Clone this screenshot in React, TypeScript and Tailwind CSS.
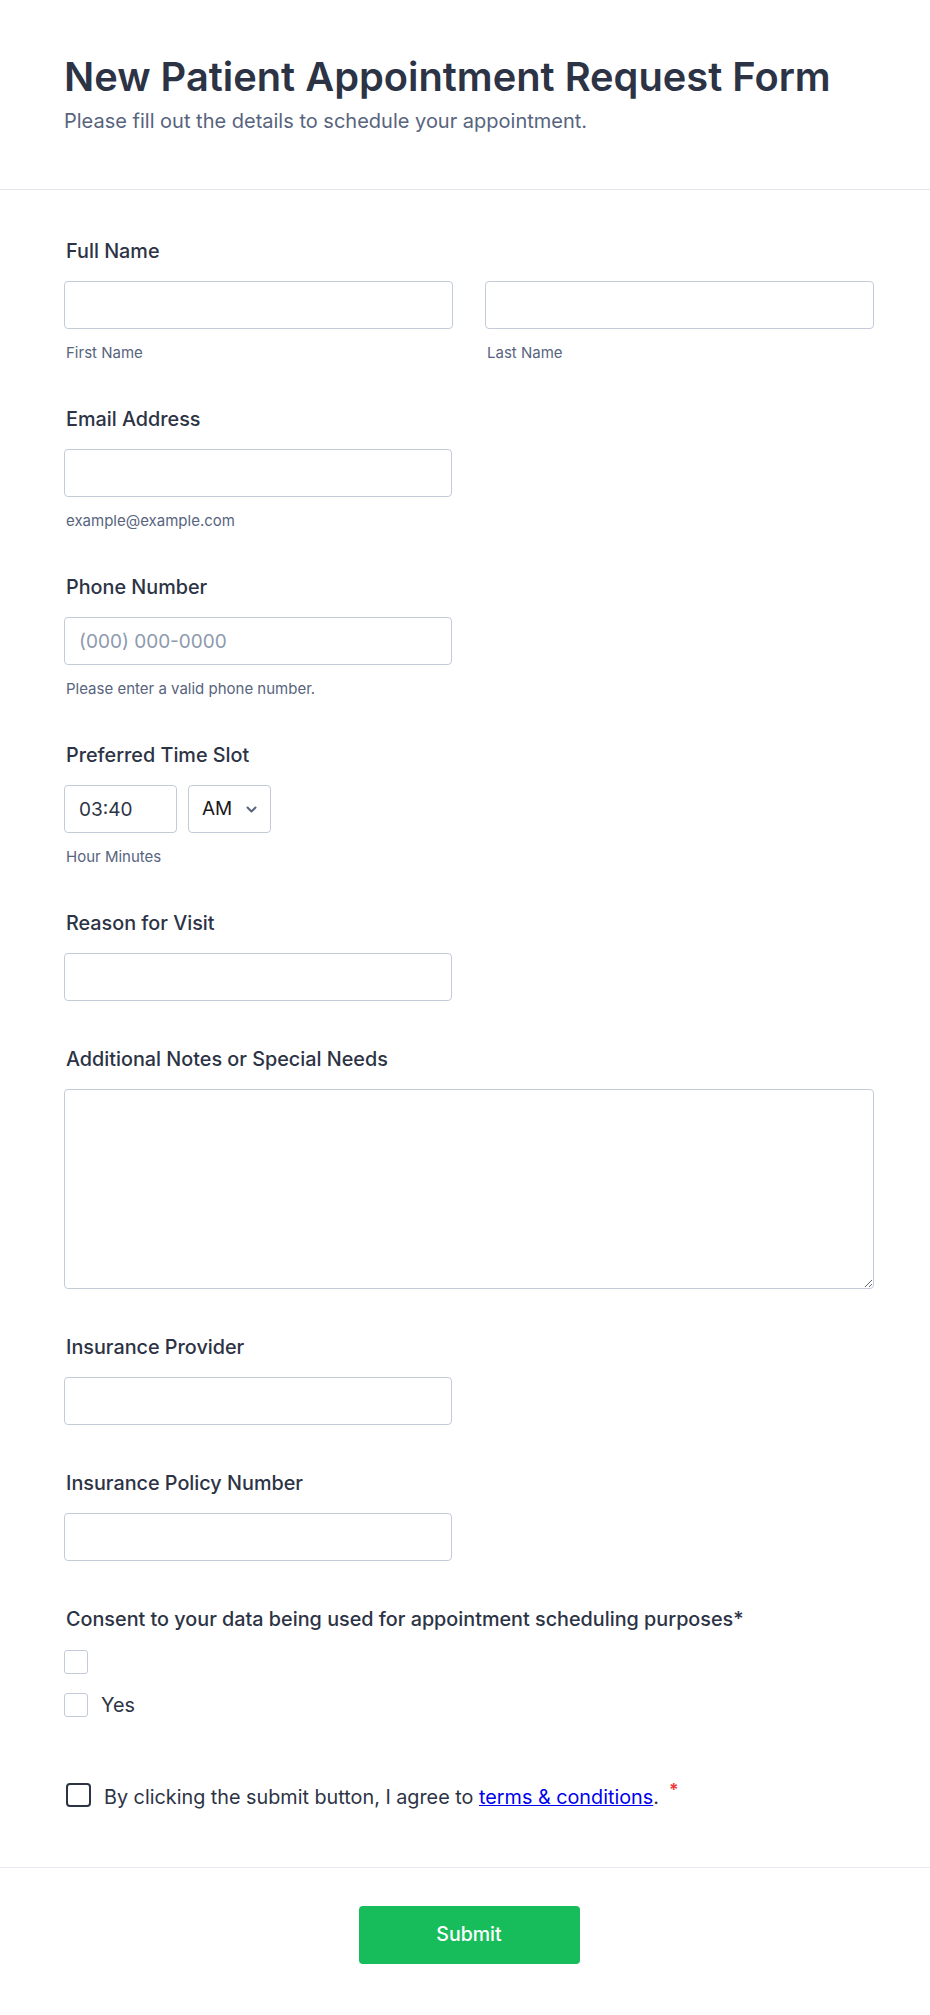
import React from 'react';

const labelCls = "block pl-[2px] text-[19.8px] leading-6 font-medium text-[#2c3345]";
const subCls = "block mt-[15px] pl-[2px] text-[15px] leading-[17px] text-[#57647e]";
const inputCls = "block w-full h-12 rounded-[4px] border border-[#c3cad8] bg-white px-[14px] text-[19px] text-[#2c3345] placeholder:text-[#8d99ad] outline-none";

const Field: React.FC<{ label: string; sub?: string; children: React.ReactNode }> = ({ label, sub, children }) => (
  <div>
    <label className={labelCls}>{label}</label>
    <div className="mt-[18px]">{children}</div>
    {sub && <span className={subCls}>{sub}</span>}
  </div>
);

export default function App() {
  return (
    <div className="min-h-screen bg-white font-['Inter','Noto_Sans',sans-serif] text-[#2c3345]">
      {/* Header */}
      <header className="pl-16 pr-14 pt-[53px] pb-[56px] border-b border-[#e3e5ec]">
        <h1 className="text-[39.8px] leading-[48px] font-semibold text-[#2c3345]">
          New Patient Appointment Request Form
        </h1>
        <p className="mt-2 text-[20px] leading-6 text-[#57647e]">
          Please fill out the details to schedule your appointment.
        </p>
      </header>

      {/* Fields */}
      <div className="pl-16 pr-14 pt-[49px] flex flex-col gap-[46px]">
        <div>
          <label className={labelCls}>Full Name</label>
          <div className="mt-[18px] grid grid-cols-2 gap-8">
            <div>
              <input className={inputCls} />
              <span className={subCls}>First Name</span>
            </div>
            <div>
              <input className={inputCls} />
              <span className={subCls}>Last Name</span>
            </div>
          </div>
        </div>

        <Field label="Email Address" sub="example@example.com">
          <input className={`${inputCls} !w-[388px]`} />
        </Field>

        <Field label="Phone Number" sub="Please enter a valid phone number.">
          <input className={`${inputCls} !w-[388px]`} placeholder="(000) 000-0000" />
        </Field>

        <Field label="Preferred Time Slot" sub="Hour Minutes">
          <div className="flex gap-[11px]">
            <input className={`${inputCls} !w-[113px]`} defaultValue="03:40" />
            <div className="relative w-[83px] h-12 rounded-[4px] border border-[#c3cad8] flex items-center pl-[13px] text-[19px] text-[#1a1a1a]">
              AM
              <svg className="absolute right-[13px] top-[20px]" width="11" height="7" viewBox="0 0 11 7" fill="none">
                <path d="M1.5 1.5l4 4 4-4" stroke="#57647e" strokeWidth="2" strokeLinecap="round" strokeLinejoin="round" />
              </svg>
            </div>
          </div>
        </Field>

        <Field label="Reason for Visit">
          <input className={`${inputCls} !w-[388px]`} />
        </Field>

        <Field label="Additional Notes or Special Needs">
          <textarea className="block w-full h-[200px] rounded-[4px] border border-[#c3cad8] bg-white px-[14px] py-3 text-[19px] outline-none resize-y" />
        </Field>

        <Field label="Insurance Provider">
          <input className={`${inputCls} !w-[388px]`} />
        </Field>

        <Field label="Insurance Policy Number">
          <input className={`${inputCls} !w-[388px]`} />
        </Field>

        <div>
          <label className={labelCls}>Consent to your data being used for appointment scheduling purposes*</label>
          <div className="mt-[19px] flex flex-col gap-[19px]">
            <div className="flex items-center">
              <span className="w-6 h-6 rounded-[3px] border border-[#c3cad8] bg-white" />
            </div>
            <div className="flex items-center gap-[13px]">
              <span className="w-6 h-6 rounded-[3px] border border-[#c3cad8] bg-white" />
              <span className="text-[19.8px] leading-6 text-[#2c3345]">Yes</span>
            </div>
          </div>
        </div>
      </div>

      {/* Terms */}
      <div className="pl-16 pr-14 pt-[65px] pb-[58px]">
        <div className="flex items-center gap-[13px] pl-[2px]">
          <span className="w-[25px] h-6 shrink-0 rounded-[4px] border-2 border-[#2c3345] bg-white" />
          <span className="text-[19.8px] leading-6 text-[#2c3345]">
            By clicking the submit button, I agree to{' '}
            <a href="#" className="text-[#0000ee] underline">terms &amp; conditions</a>.
            <span className="ml-[10px] text-[#f23a3c] font-bold text-[17px] align-super leading-none">*</span>
          </span>
        </div>
      </div>

      {/* Footer */}
      <div className="border-t border-[#eaebf2] pl-16 pr-14 pt-[38px] pb-[51px] flex justify-center">
        <button className="w-[221px] h-[58px] rounded-[4px] bg-[#18bd5b] text-white text-[19.5px] font-medium">
          Submit
        </button>
      </div>
    </div>
  );
}
